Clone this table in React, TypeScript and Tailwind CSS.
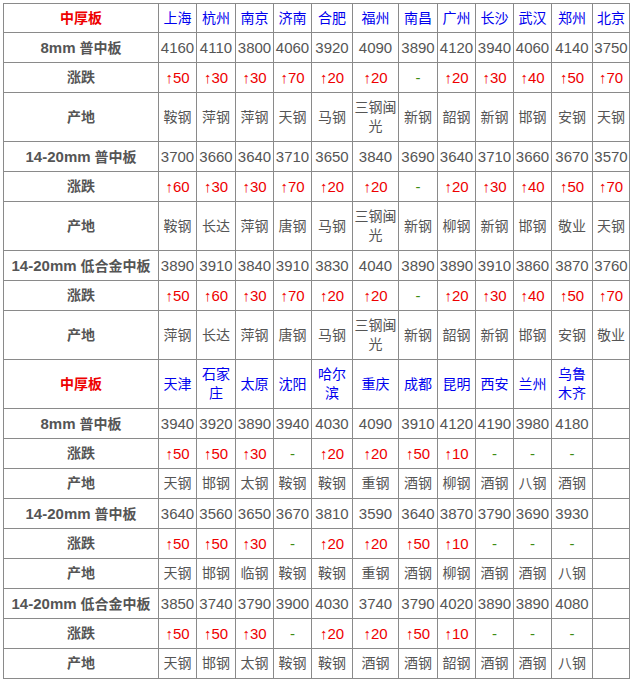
const colWidths = [155, 38, 39, 38, 38, 41, 46, 39, 38, 38, 38, 41, 37]

type Block = {
  cities: string[]
  rows: { label: string; prices: string[]; changes: string[]; origins: string[] }[]
  tall: boolean
}

const blocks: Block[] = [
  {
    cities: ["上海", "杭州", "南京", "济南", "合肥", "福州", "南昌", "广州", "长沙", "武汉", "郑州", "北京"],
    tall: true,
    rows: [
      {
        label: "8mm 普中板",
        prices: ["4160", "4110", "3800", "4060", "3920", "4090", "3890", "4120", "3940", "4060", "4140", "3750"],
        changes: ["↑50", "↑30", "↑30", "↑70", "↑20", "↑20", "-", "↑20", "↑30", "↑40", "↑50", "↑70"],
        origins: ["鞍钢", "萍钢", "萍钢", "天钢", "马钢", "三钢闽光", "新钢", "韶钢", "新钢", "邯钢", "安钢", "天钢"],
      },
      {
        label: "14-20mm 普中板",
        prices: ["3700", "3660", "3640", "3710", "3650", "3840", "3690", "3640", "3710", "3660", "3670", "3570"],
        changes: ["↑60", "↑30", "↑30", "↑70", "↑20", "↑20", "-", "↑20", "↑30", "↑40", "↑50", "↑70"],
        origins: ["鞍钢", "长达", "萍钢", "唐钢", "马钢", "三钢闽光", "新钢", "柳钢", "新钢", "邯钢", "敬业", "天钢"],
      },
      {
        label: "14-20mm 低合金中板",
        prices: ["3890", "3910", "3840", "3910", "3830", "4040", "3890", "3890", "3910", "3860", "3870", "3760"],
        changes: ["↑50", "↑60", "↑30", "↑70", "↑20", "↑20", "-", "↑20", "↑30", "↑40", "↑50", "↑70"],
        origins: ["萍钢", "长达", "萍钢", "唐钢", "马钢", "三钢闽光", "新钢", "韶钢", "新钢", "邯钢", "安钢", "敬业"],
      },
    ],
  },
  {
    cities: ["天津", "石家庄", "太原", "沈阳", "哈尔滨", "重庆", "成都", "昆明", "西安", "兰州", "乌鲁木齐", ""],
    tall: false,
    rows: [
      {
        label: "8mm 普中板",
        prices: ["3940", "3920", "3890", "3940", "4030", "4090", "3910", "4120", "4190", "3980", "4180", ""],
        changes: ["↑50", "↑50", "↑30", "-", "↑20", "↑20", "↑50", "↑10", "-", "-", "-", ""],
        origins: ["天钢", "邯钢", "太钢", "鞍钢", "鞍钢", "重钢", "酒钢", "柳钢", "酒钢", "八钢", "酒钢", ""],
      },
      {
        label: "14-20mm 普中板",
        prices: ["3640", "3560", "3650", "3670", "3810", "3590", "3640", "3870", "3790", "3690", "3930", ""],
        changes: ["↑50", "↑50", "↑30", "-", "↑20", "↑20", "↑50", "↑10", "-", "-", "-", ""],
        origins: ["天钢", "邯钢", "临钢", "鞍钢", "鞍钢", "重钢", "酒钢", "柳钢", "酒钢", "酒钢", "八钢", ""],
      },
      {
        label: "14-20mm 低合金中板",
        prices: ["3850", "3740", "3790", "3900", "4030", "3740", "3790", "4020", "3890", "3890", "4080", ""],
        changes: ["↑50", "↑50", "↑30", "-", "↑20", "↑20", "↑50", "↑10", "-", "-", "-", ""],
        origins: ["天钢", "邯钢", "太钢", "鞍钢", "鞍钢", "酒钢", "酒钢", "韶钢", "酒钢", "酒钢", "八钢", ""],
      },
    ],
  },
]

const cell = "border border-[#8a8a8a] text-center align-middle p-0 leading-[19px]"

function Label({ text }: { text: string }) {
  // latin part a bit larger, like the YaHei look
  const [latin, cjk] = text.split(" ")
  return (
    <td className={`${cell} font-bold text-[#555]`}>
      <span className="text-[15px]">{latin}</span> {cjk}
    </td>
  )
}

function Change({ v }: { v: string }) {
  if (v === "-") return <td className={`${cell} text-[#3c8c14] text-[15px]`}>-</td>
  return <td className={`${cell} text-[#ee0000] text-[15px]`}>{v}</td>
}

export default function App() {
  return (
    <div className="bg-white p-[3px] font-['Liberation_Sans','Noto_Sans_CJK_SC',sans-serif] text-[14px]">
      <table className="border-collapse table-fixed border border-[#666]" style={{ width: 627 }}>
        <colgroup>
          {colWidths.map((w, i) => (
            <col key={i} style={{ width: w }} />
          ))}
        </colgroup>
        <tbody>
          {blocks.map((b, bi) => (
            <>
              <tr key={`h${bi}`} className={bi === 0 ? "h-[29px]" : "h-[49px]"}>
                <td className={`${cell} font-bold text-[#ee0000]`}>中厚板</td>
                {b.cities.map((c, i) => (
                  <td key={i} className={`${cell} text-[#0000ee]`}>
                    {c}
                  </td>
                ))}
              </tr>
              {b.rows.map((r, ri) => (
                <>
                  <tr key={`p${bi}${ri}`} className="h-[30px]">
                    <Label text={r.label} />
                    {r.prices.map((p, i) => (
                      <td key={i} className={`${cell} text-[#555] text-[15px]`}>
                        {p}
                      </td>
                    ))}
                  </tr>
                  <tr key={`c${bi}${ri}`} className="h-[30px]">
                    <td className={`${cell} font-bold text-[#555]`}>涨跌</td>
                    {r.changes.map((c, i) => (
                      <Change key={i} v={c} />
                    ))}
                  </tr>
                  <tr key={`o${bi}${ri}`} className={b.tall ? "h-[49px]" : "h-[30px]"}>
                    <td className={`${cell} font-bold text-[#555]`}>产地</td>
                    {r.origins.map((o, i) => (
                      <td key={i} className={`${cell} text-[#555]`}>
                        {o}
                      </td>
                    ))}
                  </tr>
                </>
              ))}
            </>
          ))}
        </tbody>
      </table>
    </div>
  )
}
